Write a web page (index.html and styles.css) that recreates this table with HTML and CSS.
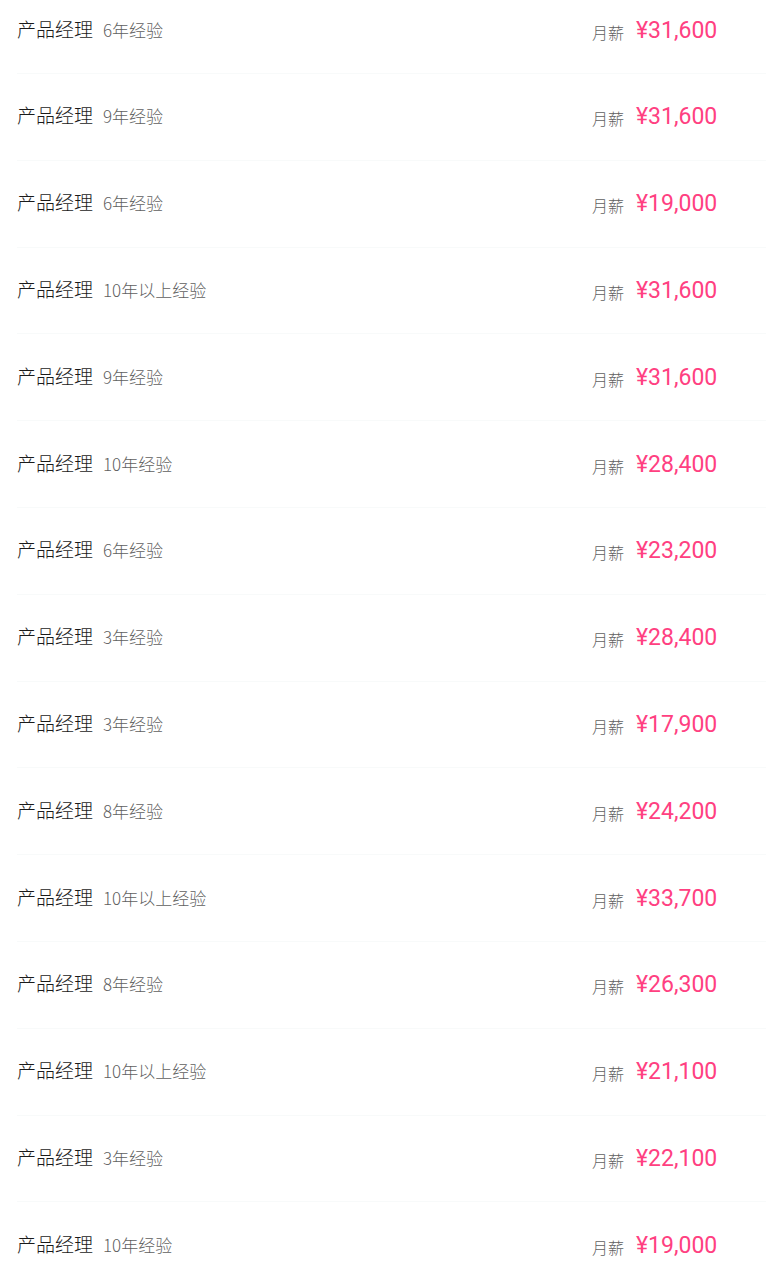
FILE: index.html
```html
<!DOCTYPE html>
<html lang="zh">
<head>
<meta charset="utf-8">
<link rel="stylesheet" href="styles.css">
</head>
<body>
<ul class="list">
  <li class="row"><div class="job"><span class="title">产品经理</span><span class="exp">6年经验</span></div><div class="pay"><span class="label">月薪</span><span class="price">¥31,600</span></div></li>
  <li class="row"><div class="job"><span class="title">产品经理</span><span class="exp">9年经验</span></div><div class="pay"><span class="label">月薪</span><span class="price">¥31,600</span></div></li>
  <li class="row"><div class="job"><span class="title">产品经理</span><span class="exp">6年经验</span></div><div class="pay"><span class="label">月薪</span><span class="price">¥19,000</span></div></li>
  <li class="row"><div class="job"><span class="title">产品经理</span><span class="exp">10年以上经验</span></div><div class="pay"><span class="label">月薪</span><span class="price">¥31,600</span></div></li>
  <li class="row"><div class="job"><span class="title">产品经理</span><span class="exp">9年经验</span></div><div class="pay"><span class="label">月薪</span><span class="price">¥31,600</span></div></li>
  <li class="row"><div class="job"><span class="title">产品经理</span><span class="exp">10年经验</span></div><div class="pay"><span class="label">月薪</span><span class="price">¥28,400</span></div></li>
  <li class="row"><div class="job"><span class="title">产品经理</span><span class="exp">6年经验</span></div><div class="pay"><span class="label">月薪</span><span class="price">¥23,200</span></div></li>
  <li class="row"><div class="job"><span class="title">产品经理</span><span class="exp">3年经验</span></div><div class="pay"><span class="label">月薪</span><span class="price">¥28,400</span></div></li>
  <li class="row"><div class="job"><span class="title">产品经理</span><span class="exp">3年经验</span></div><div class="pay"><span class="label">月薪</span><span class="price">¥17,900</span></div></li>
  <li class="row"><div class="job"><span class="title">产品经理</span><span class="exp">8年经验</span></div><div class="pay"><span class="label">月薪</span><span class="price">¥24,200</span></div></li>
  <li class="row"><div class="job"><span class="title">产品经理</span><span class="exp">10年以上经验</span></div><div class="pay"><span class="label">月薪</span><span class="price">¥33,700</span></div></li>
  <li class="row"><div class="job"><span class="title">产品经理</span><span class="exp">8年经验</span></div><div class="pay"><span class="label">月薪</span><span class="price">¥26,300</span></div></li>
  <li class="row"><div class="job"><span class="title">产品经理</span><span class="exp">10年以上经验</span></div><div class="pay"><span class="label">月薪</span><span class="price">¥21,100</span></div></li>
  <li class="row"><div class="job"><span class="title">产品经理</span><span class="exp">3年经验</span></div><div class="pay"><span class="label">月薪</span><span class="price">¥22,100</span></div></li>
  <li class="row"><div class="job"><span class="title">产品经理</span><span class="exp">10年经验</span></div><div class="pay"><span class="label">月薪</span><span class="price">¥19,000</span></div></li>
</ul>
</body>
</html>
```
FILE: styles.css
```css
html, body {
  margin: 0;
  padding: 0;
  background: #fff;
  overflow: hidden;
}
body {
  font-family: "Noto Sans CJK SC", "Noto Sans", sans-serif;
}
.list {
  list-style: none;
  margin: -12.8px 0 0 17px;
  padding: 0;
}
.row {
  box-sizing: border-box;
  height: 86.8px;
  padding-bottom: 2px;
  display: flex;
  align-items: center;
  justify-content: space-between;
  border-bottom: 1px solid #f8fafa;
}
.job {
  display: flex;
  align-items: baseline;
  gap: 10px;
}
.title {
  font-size: 19px;
  font-weight: 300;
  color: #1a1a1a;
  line-height: 24px;
}
.exp {
  font-size: 17px;
  font-weight: 300;
  color: #5f5f5f;
}
.pay {
  width: 174px;
  display: flex;
  align-items: baseline;
  gap: 12px;
}
.label {
  font-size: 16px;
  font-weight: 300;
  color: #5f5f5f;
  position: relative;
  top: 2px;
}
.price {
  font-family: Roboto, "Noto Sans", sans-serif;
  font-size: 23px;
  color: #ff4081;
  position: relative;
  top: 1px;
}
```
